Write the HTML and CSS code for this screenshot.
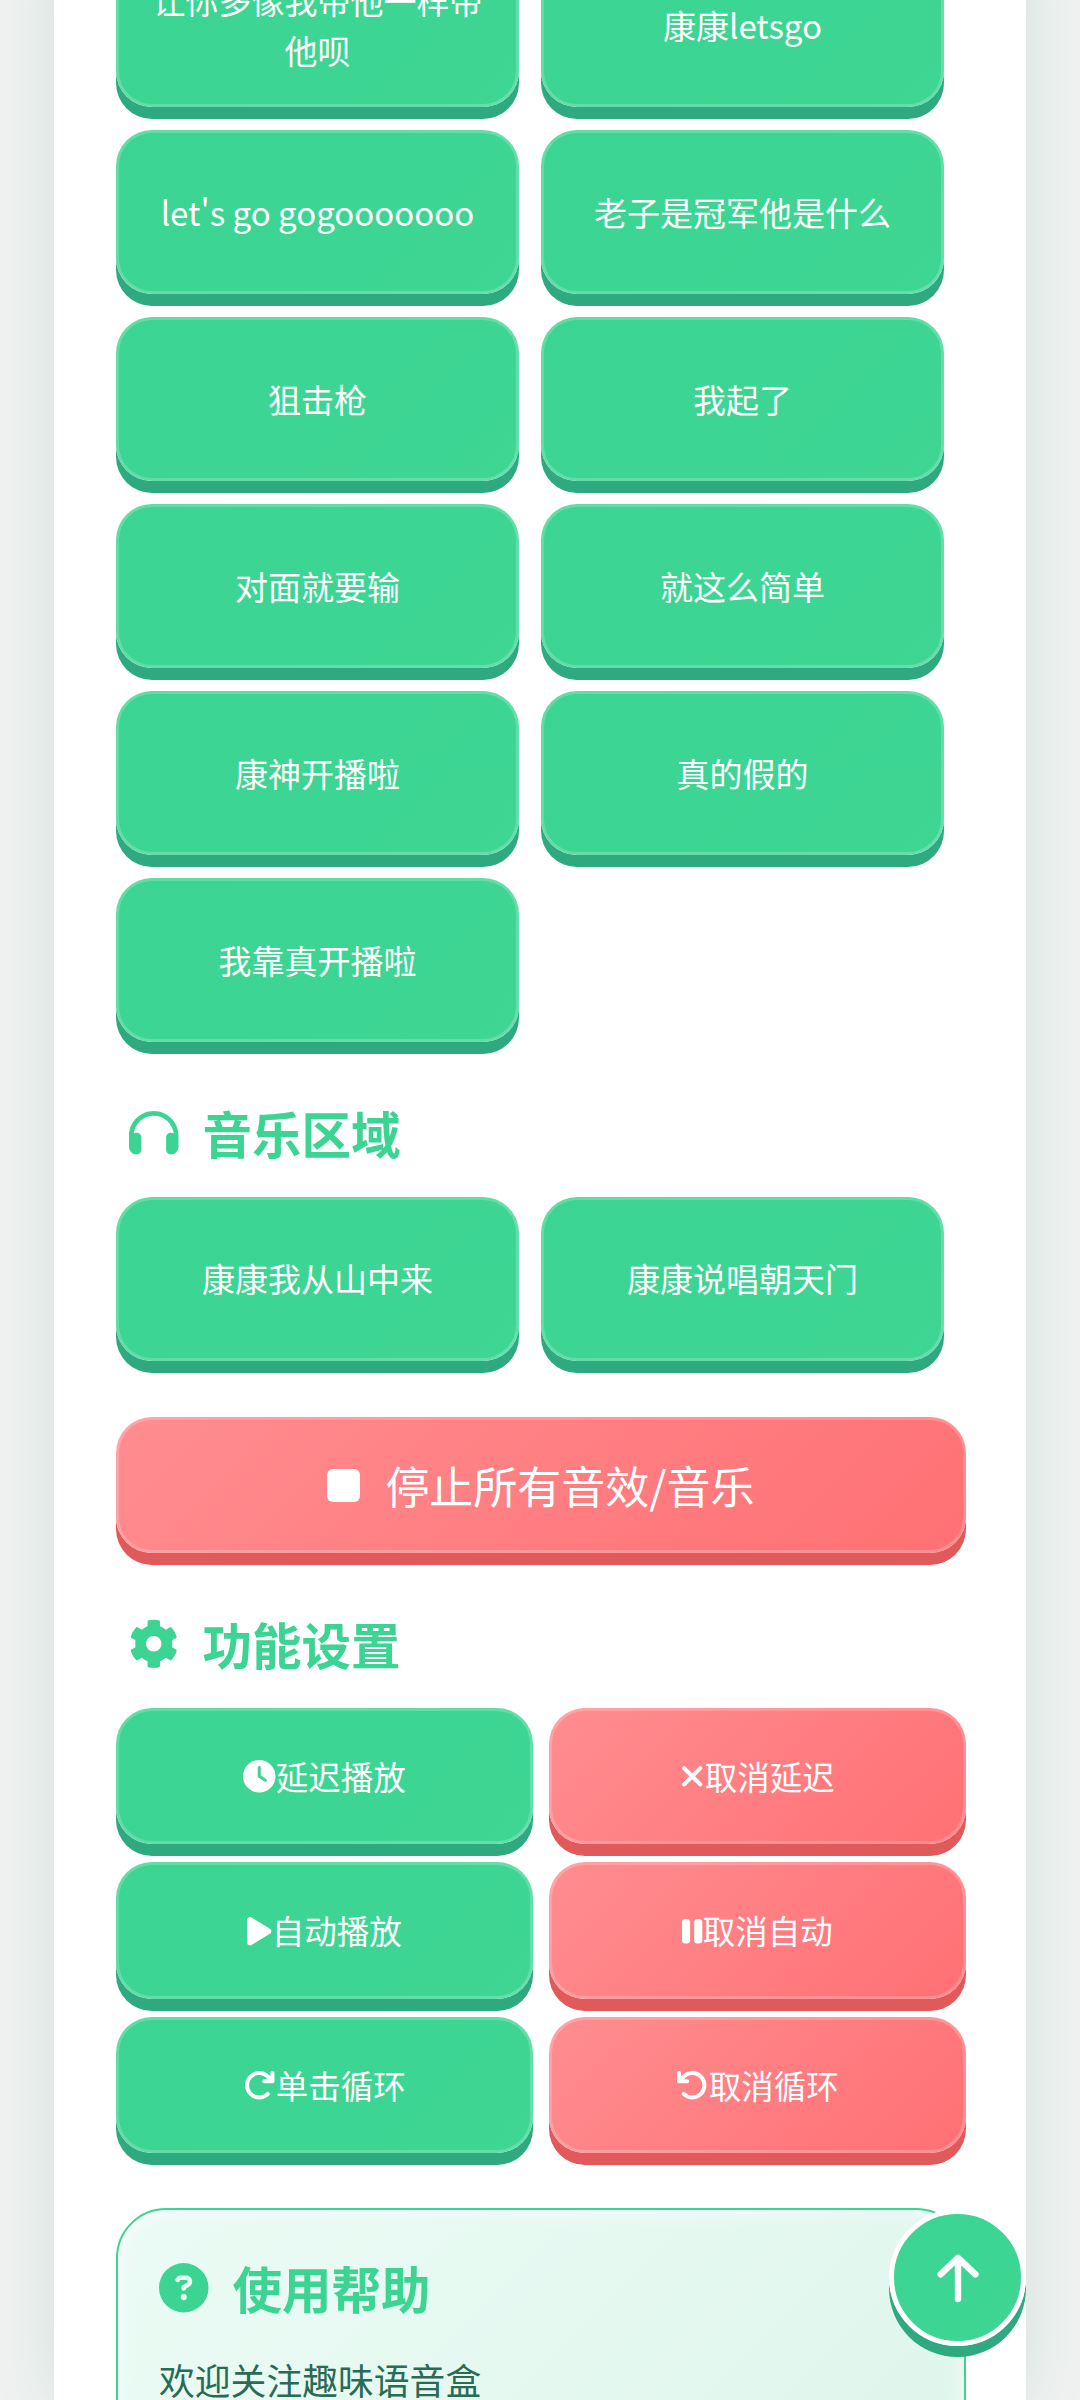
FILE: index.html
```html
<!DOCTYPE html>
<html lang="zh-CN">

<head>
  <meta charset="UTF-8">
  <title>趣味语音盒</title>
  <link rel="stylesheet" href="styles.css">
</head>

<body>
  <div class="page">
    <div class="sound-grid">
      <button class="btn">让你多像我带他一样带他呗</button>
      <button class="btn">康康letsgo</button>
      <button class="btn">let's go gogooooooo</button>
      <button class="btn">老子是冠军他是什么</button>
      <button class="btn">狙击枪</button>
      <button class="btn">我起了</button>
      <button class="btn">对面就要输</button>
      <button class="btn">就这么简单</button>
      <button class="btn">康神开播啦</button>
      <button class="btn">真的假的</button>
      <button class="btn">我靠真开播啦</button>
    </div>

    <h2 class="section-title">
      <svg class="icon" viewBox="0 0 512 512"><path d="M256 80C149.9 80 62.4 159.4 49.6 262c9.4-3.8 19.6-6 30.4-6c26.5 0 48 21.5 48 48V432c0 26.5-21.5 48-48 48c-44.2 0-80-35.8-80-80V384 336 288C0 146.6 114.6 32 256 32s256 114.6 256 256v48 48 16c0 44.2-35.8 80-80 80c-26.5 0-48-21.5-48-48V304c0-26.5 21.5-48 48-48c10.8 0 21 2.2 30.4 6C449.6 159.4 362.1 80 256 80z"/></svg>
      <span>音乐区域</span>
    </h2>
    <div class="sound-grid">
      <button class="btn">康康我从山中来</button>
      <button class="btn">康康说唱朝天门</button>
    </div>

    <button class="btn btn-red btn-stop">
      <svg class="stop-icon" viewBox="0 0 33 33"><rect width="33" height="33" rx="6"/></svg>
      <span>停止所有音效/音乐</span>
    </button>

    <h2 class="section-title">
      <svg class="icon" viewBox="0 0 512 512"><path d="M487.4 315.7l-42.6-24.6c4.3-23.2 4.3-47 0-70.2l42.6-24.6c4.9-2.8 7.1-8.6 5.5-14-11.1-35.6-30-67.8-54.7-94.6-3.8-4.1-10-5.1-14.8-2.3L380.8 110c-17.9-15.4-38.5-27.3-60.8-35.1V25.8c0-5.6-3.9-10.5-9.4-11.7-36.7-8.2-74.3-7.8-109.2 0-5.5 1.2-9.4 6.1-9.4 11.7V75c-22.2 7.9-42.8 19.8-60.8 35.1L88.7 85.5c-4.9-2.8-11-1.9-14.8 2.3-24.7 26.7-43.6 58.9-54.7 94.6-1.7 5.4.6 11.2 5.5 14L67.3 221c-4.3 23.2-4.3 47 0 70.2l-42.6 24.6c-4.9 2.8-7.1 8.6-5.5 14 11.1 35.6 30 67.8 54.7 94.6 3.8 4.1 10 5.1 14.8 2.3l42.6-24.6c17.9 15.4 38.5 27.3 60.8 35.1v49.2c0 5.6 3.9 10.5 9.4 11.7 36.7 8.2 74.3 7.8 109.2 0 5.5-1.2 9.4-6.1 9.4-11.7v-49.2c22.2-7.9 42.8-19.8 60.8-35.1l42.6 24.6c4.9 2.8 11 1.9 14.8-2.3 24.7-26.7 43.6-58.9 54.7-94.6 1.5-5.5-.7-11.3-5.6-14.1zM256 336c-44.1 0-80-35.9-80-80s35.9-80 80-80 80 35.9 80 80-35.9 80-80 80z"/></svg>
      <span>功能设置</span>
    </h2>
    <div class="control-grid">
      <button class="btn btn-small">
        <svg class="icon" viewBox="0 0 512 512"><path d="M256 0a256 256 0 1 1 0 512A256 256 0 1 1 256 0zM232 120V256c0 8 4 15.5 10.7 20l96 64c11 7.4 25.9 4.4 33.3-6.7s4.4-25.9-6.7-33.3L280 243.2V120c0-13.3-10.7-24-24-24s-24 10.7-24 24z"/></svg>
        <span>延迟播放</span>
      </button>
      <button class="btn btn-red btn-small">
        <svg class="icon" viewBox="0 0 384 512"><path d="M342.6 150.6c12.5-12.5 12.5-32.8 0-45.3s-32.8-12.5-45.3 0L192 210.7 86.6 105.4c-12.5-12.5-32.8-12.5-45.3 0s-12.5 32.8 0 45.3L146.7 256 41.4 361.4c-12.5 12.5-12.5 32.8 0 45.3s32.8 12.5 45.3 0L192 301.3 297.4 406.6c12.5 12.5 32.8 12.5 45.3 0s12.5-32.8 0-45.3L237.3 256 342.6 150.6z"/></svg>
        <span>取消延迟</span>
      </button>
      <button class="btn btn-small">
        <svg class="icon" viewBox="0 0 384 512"><path d="M73 39c-14.8-9.1-33.4-9.4-48.5-.9S0 62.6 0 80V432c0 17.4 9.4 33.4 24.5 41.9s33.7 8.1 48.5-.9L361 297c14.3-8.7 23-24.2 23-41s-8.7-32.2-23-41L73 39z"/></svg>
        <span>自动播放</span>
      </button>
      <button class="btn btn-red btn-small">
        <svg class="icon" viewBox="0 0 320 512"><path d="M48 64C21.5 64 0 85.5 0 112V400c0 26.5 21.5 48 48 48H80c26.5 0 48-21.5 48-48V112c0-26.5-21.5-48-48-48H48zm192 0c-26.5 0-48 21.5-48 48V400c0 26.5 21.5 48 48 48h32c26.5 0 48-21.5 48-48V112c0-26.5-21.5-48-48-48H240z"/></svg>
        <span>取消自动</span>
      </button>
      <button class="btn btn-small">
        <svg class="icon" viewBox="0 0 512 512"><path d="M386.3 160H336c-17.7 0-32 14.3-32 32s14.3 32 32 32H464c17.7 0 32-14.3 32-32V64c0-17.7-14.3-32-32-32s-32 14.3-32 32v51.2L414.4 97.6c-87.5-87.5-229.3-87.5-316.8 0s-87.5 229.3 0 316.8s229.3 87.5 316.8 0c12.5-12.5 12.5-32.8 0-45.3s-32.8-12.5-45.3 0c-62.5 62.5-163.8 62.5-226.3 0s-62.5-163.8 0-226.3s163.8-62.5 226.3 0L386.3 160z"/></svg>
        <span>单击循环</span>
      </button>
      <button class="btn btn-red btn-small">
        <svg class="icon" viewBox="0 0 512 512"><path d="M125.7 160H176c17.7 0 32 14.3 32 32s-14.3 32-32 32H48c-17.7 0-32-14.3-32-32V64c0-17.7 14.3-32 32-32s32 14.3 32 32v51.2L97.6 97.6c87.5-87.5 229.3-87.5 316.8 0s87.5 229.3 0 316.8s-229.3 87.5-316.8 0c-12.5-12.5-12.5-32.8 0-45.3s32.8-12.5 45.3 0c62.5 62.5 163.8 62.5 226.3 0s62.5-163.8 0-226.3s-163.8-62.5-226.3 0L125.7 160z"/></svg>
        <span>取消循环</span>
      </button>
    </div>

    <div class="help">
      <h2 class="section-title help-title">
        <svg class="icon" viewBox="0 0 512 512"><path d="M256 512A256 256 0 1 0 256 0a256 256 0 1 0 0 512zM169.8 165.3c7.9-22.3 29.1-37.3 52.8-37.3h58.3c34.9 0 63.1 28.3 63.1 63.1c0 22.6-12.1 43.5-31.7 54.8L280 264.4c-.2 13-10.9 23.6-24 23.6c-13.3 0-24-10.7-24-24V250.5c0-8.6 4.6-16.5 12.1-20.8l44.3-25.4c4.7-2.7 7.6-7.7 7.6-13.1c0-8.4-6.8-15.1-15.1-15.1H222.6c-3.4 0-6.4 2.1-7.5 5.3l-.4 1.2c-4.4 12.5-18.2 19-30.6 14.6s-19-18.2-14.6-30.6l.4-1.2zM224 352a32 32 0 1 1 64 0 32 32 0 1 1 -64 0z"/></svg>
        <span>使用帮助</span>
      </h2>
      <p class="help-text">欢迎关注趣味语音盒</p>
    </div>
  </div>

  <button class="to-top">
    <svg viewBox="0 0 48 56"><path d="M24 51V7M5 24L24 6L43 24"/></svg>
  </button>
</body>

</html>
```

FILE: styles.css
```css
html,
body {
  height: 2400px;
  margin: 0;
  overflow: hidden;
}

body {
  font-family: "Noto Sans CJK SC", "Noto Sans", sans-serif;
  background-color: #f0f2f1;
}

.page {
  box-sizing: border-box;
  width: 972px;
  height: 2457px;
  margin: -57px auto 0;
  padding: 0 60px 0 62px;
  overflow: hidden;
  background-color: #fff;
  box-shadow: 0 0 60px rgba(46, 125, 100, 0.14);
}

.sound-grid {
  display: grid;
  grid-template-columns: repeat(2, 403px);
  gap: 23px 22px;
}

.control-grid {
  display: grid;
  grid-template-columns: repeat(2, 1fr);
  gap: 18px 16px;
}

.btn {
  display: flex;
  align-items: center;
  justify-content: center;
  box-sizing: border-box;
  height: 164px;
  padding: 1px 30px 0;
  border: 3px solid rgba(255, 255, 255, 0.2);
  border-radius: 36px;
  background: linear-gradient(135deg, #3bd492, #3fd694);
  background-origin: border-box;
  box-shadow: 0 12px 0 #2fa97f;
  color: #fff;
  font-family: inherit;
  font-size: 33px;
  line-height: 1.5;
  text-align: center;
}

.btn-red {
  background: linear-gradient(135deg, #ff8d90, #ff7074);
  background-origin: border-box;
  box-shadow: 0 12px 0 #e0595b;
}

.btn-small {
  height: 136.5px;
  font-size: 32.5px;
}

.btn-stop {
  width: 100%;
  height: 136px;
  margin-top: 56.5px;
  padding-top: 0;
  font-size: 44px;
}

.stop-icon {
  width: 33px;
  height: 33px;
  margin-right: 25px;
  fill: currentColor;
}

.icon {
  height: 1em;
  fill: currentColor;
}

.section-title {
  display: flex;
  align-items: center;
  gap: 24px;
  margin: 54px 0 27px;
  padding-left: 13px;
  color: #3bd492;
  font-size: 49.5px;
  font-weight: 700;
  line-height: 73.5px;
}

.help {
  margin-top: 55px;
  padding: 41px;
  border: 2px solid #3bd492;
  border-radius: 50px;
  background: linear-gradient(135deg, #ebfbf5, #dff6ec);
  box-shadow: inset 0 0 24px rgba(255, 255, 255, 0.7);
}

.help-title {
  margin: 0;
  padding-left: 0;
}

.help-text {
  margin: 28px 0 0;
  color: #2a6b55;
  font-size: 35.8px;
  line-height: 1.5;
}

.to-top {
  position: fixed;
  right: 54px;
  bottom: 54px;
  box-sizing: border-box;
  width: 137px;
  height: 137px;
  padding: 0;
  border: 5px solid #fff;
  border-radius: 50%;
  background: linear-gradient(135deg, #3bd492, #3fd694);
  background-origin: border-box;
  box-shadow: 0 11px 0 #2fa97f;
}

.to-top svg {
  display: block;
  width: 44px;
  height: 52px;
  margin: 0 auto;
  fill: none;
  stroke: #fff;
  stroke-width: 7px;
  stroke-linecap: round;
  stroke-linejoin: round;
}
```
